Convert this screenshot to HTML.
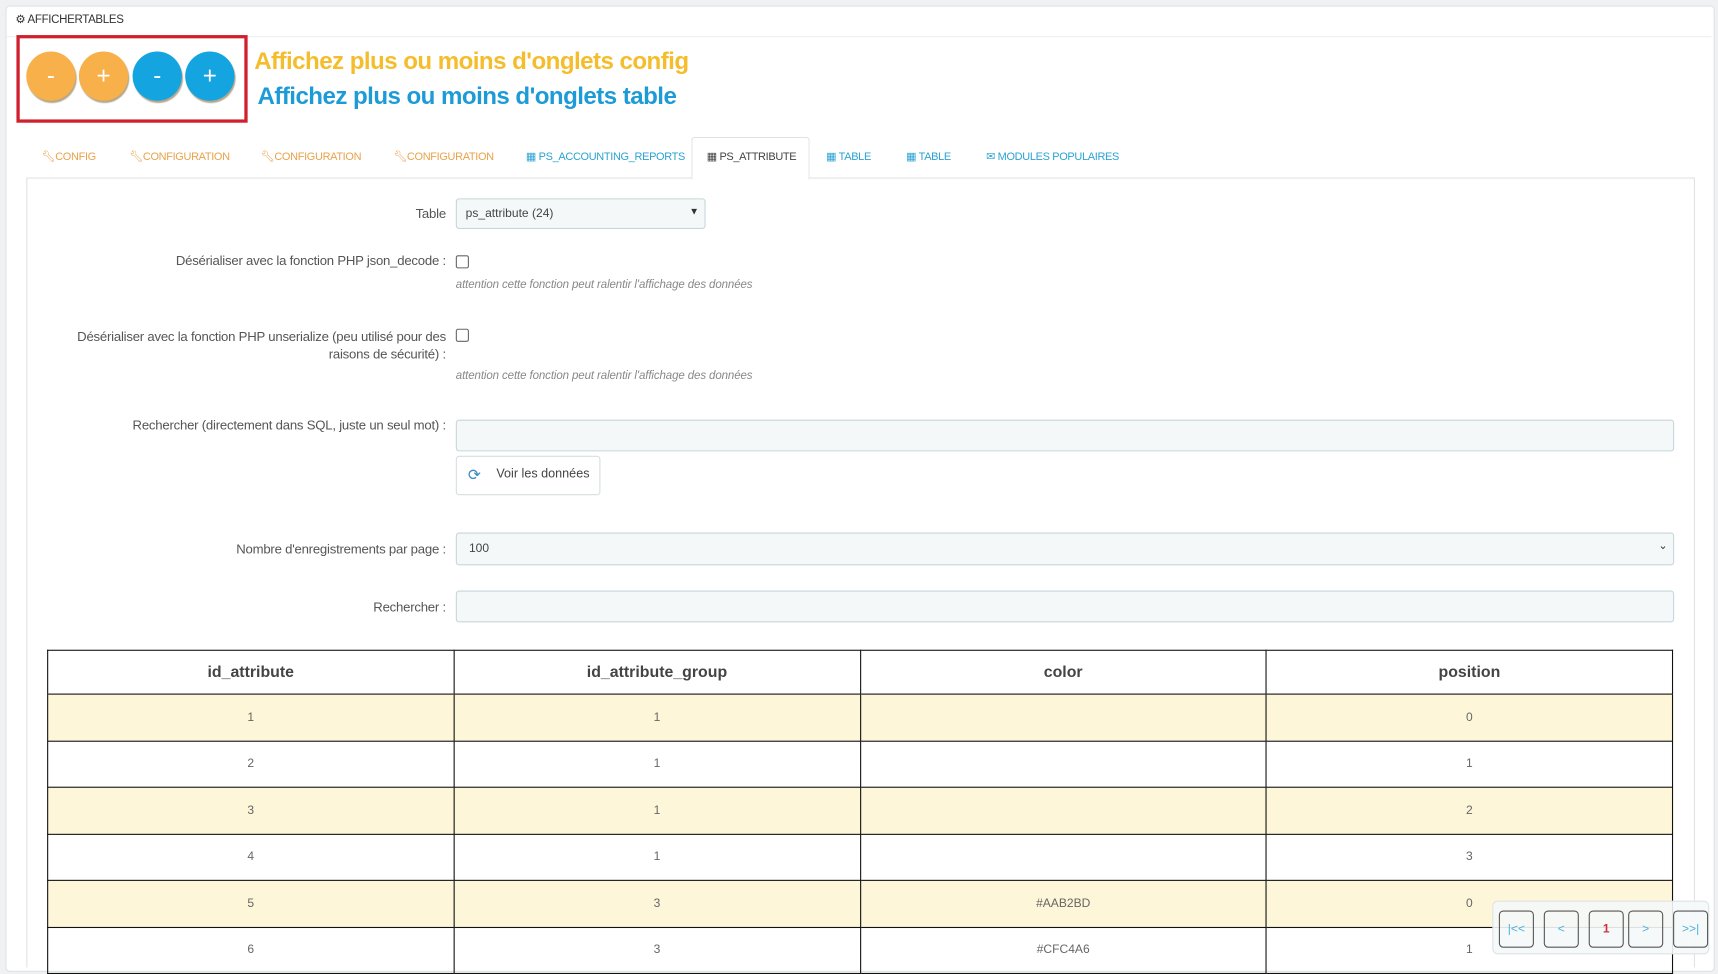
<!DOCTYPE html>
<html><head><meta charset="utf-8"><style>
html,body{margin:0;padding:0;width:1718px;height:964px;overflow:hidden;background:#eff1f2;}
#w{position:absolute;left:0;top:0;width:1568px;height:880px;transform:scale(1.09566);transform-origin:0 0;font-family:"Liberation Sans Narrow","Liberation Sans",sans-serif;color:#555;}
.a{position:absolute;}
.panel{left:5px;top:5px;width:1558px;height:880px;background:#fff;border:1px solid #dfe3e6;border-radius:4px;}
.c{border-radius:50%;width:45px;height:45px;color:#fff;font-size:22px;text-align:center;line-height:43px;box-shadow:1px 2px 1px rgba(90,60,0,.45);font-family:"Liberation Sans",sans-serif;}
.o{background:#f8b04a}.b{background:#14a4e0}
.tab{top:138px;font-size:10px;white-space:nowrap;letter-spacing:-0.3px;}
.or{color:#e9a24a}.bl{color:#2aa3d3}
.lbl{right:1161px;text-align:right;font-size:12px;color:#555;white-space:nowrap;letter-spacing:-0.2px;}
.inp{background:#f5f8f9;border:1px solid #c7d6db;border-radius:3px;}
.hint{left:416px;font-size:10.5px;font-style:italic;color:#888;letter-spacing:-0.1px;}
.chk{width:10px;height:10px;border:1px solid #666;border-radius:2px;background:#fff;left:416px;}
table{position:absolute;left:43px;top:593px;width:1484px;border-collapse:collapse;font-size:11px;table-layout:fixed;}
td,th{border:1.5px solid #111;text-align:center;padding:0;}
th{height:39px;font-size:14.5px;color:#444;font-weight:bold;border-bottom:none;}
td{height:41.5px;color:#666;}
tr.y td{background:#fdf6d8;}
.pg{left:1362px;top:822px;width:196px;height:47px;background:rgba(245,248,250,.9);border:1px solid #dde3e6;border-radius:5px;}
.pb{top:8px;width:30px;height:32px;border:1px solid #555;border-radius:4px;font-size:11px;color:#4ab0d8;text-align:center;line-height:32px;}
</style></head><body><div id="w">
<div class="a panel"></div>
<div class="a" style="left:14px;top:12px;font-size:10.5px;color:#333;letter-spacing:-0.3px;">⚙ AFFICHERTABLES</div>
<div class="a" style="left:6px;top:33px;width:1556px;height:1px;background:#eceff1;"></div>
<div class="a" style="left:15px;top:32px;width:205px;height:74px;border:3px solid #d0202e;"></div>
<div class="a c o" style="left:24px;top:47px;">-</div>
<div class="a c o" style="left:72px;top:47px;">+</div>
<div class="a c b" style="left:121px;top:47px;">-</div>
<div class="a c b" style="left:169px;top:47px;">+</div>
<div class="a" style="left:232px;top:43px;font-size:22px;font-weight:bold;color:#f5bd2c;white-space:nowrap;font-family:'Liberation Sans',sans-serif;letter-spacing:-0.5px;">Affichez plus ou moins d'onglets config</div>
<div class="a" style="left:235px;top:75px;font-size:22px;font-weight:bold;color:#1d9bd6;white-space:nowrap;font-family:'Liberation Sans',sans-serif;letter-spacing:-0.5px;">Affichez plus ou moins d'onglets table</div>
<div class="a" style="left:24px;top:162px;width:1521px;height:720px;border:1px solid #dfe3e6;border-bottom:none;"></div>
<div class="a" style="left:631px;top:125px;width:106px;height:38px;background:#fff;border:1px solid #dfe3e6;border-bottom:none;border-radius:3px 3px 0 0;"></div>
<div class="a tab or" style="left:38px;">🔧︎CONFIG</div>
<div class="a tab or" style="left:118px;">🔧︎CONFIGURATION</div>
<div class="a tab or" style="left:238px;">🔧︎CONFIGURATION</div>
<div class="a tab or" style="left:359px;">🔧︎CONFIGURATION</div>
<div class="a tab bl" style="left:480px;">▦ PS_ACCOUNTING_REPORTS</div>
<div class="a tab" style="left:645px;color:#444;">▦ PS_ATTRIBUTE</div>
<div class="a tab bl" style="left:754px;">▦ TABLE</div>
<div class="a tab bl" style="left:827px;">▦ TABLE</div>
<div class="a tab bl" style="left:900px;">✉ MODULES POPULAIRES</div>

<div class="a lbl" style="top:188px;">Table</div>
<div class="a inp" style="left:416px;top:181px;width:226px;height:26px;background:#f5f8f9;"><span class="a" style="left:8px;top:7px;font-size:11px;color:#444;">ps_attribute (24)</span><span class="a" style="right:5px;top:6px;font-size:9px;color:#333;">▼</span></div>
<div class="a lbl" style="top:231px;">Désérialiser avec la fonction PHP json_decode :</div>
<div class="a chk" style="top:233px;"></div>
<div class="a hint" style="top:254px;">attention cette fonction peut ralentir l'affichage des données</div>
<div class="a lbl" style="top:299px;line-height:16px;">Désérialiser avec la fonction PHP unserialize (peu utilisé pour des<br>raisons de sécurité) :</div>
<div class="a chk" style="top:300px;"></div>
<div class="a hint" style="top:337px;">attention cette fonction peut ralentir l'affichage des données</div>
<div class="a lbl" style="top:381px;">Rechercher (directement dans SQL, juste un seul mot) :</div>
<div class="a inp" style="left:416px;top:383px;width:1110px;height:27px;"></div>
<div class="a" style="left:416px;top:416px;width:130px;height:34px;border:1px solid #d8dee1;border-radius:3px;background:#fff;"><span class="a" style="left:10px;top:8px;color:#3a8bc4;font-size:14px;">⟳</span><span class="a" style="left:36px;top:10px;font-size:11.5px;color:#444;">Voir les données</span></div>
<div class="a lbl" style="top:494px;">Nombre d'enregistrements par page :</div>
<div class="a inp" style="left:416px;top:486px;width:1110px;height:28px;"><span class="a" style="left:11px;top:8px;font-size:11px;color:#444;">100</span><span class="a" style="right:5px;top:6px;font-size:10px;color:#333;">⌄</span></div>
<div class="a lbl" style="top:547px;">Rechercher :</div>
<div class="a inp" style="left:416px;top:539px;width:1110px;height:27px;"></div>

<table>
<colgroup><col style="width:25%"><col style="width:25%"><col style="width:25%"><col style="width:25%"></colgroup>
<tr><th>id_attribute</th><th>id_attribute_group</th><th>color</th><th>position</th></tr>
<tr class="y"><td>1</td><td>1</td><td></td><td>0</td></tr>
<tr><td>2</td><td>1</td><td></td><td>1</td></tr>
<tr class="y"><td>3</td><td>1</td><td></td><td>2</td></tr>
<tr><td>4</td><td>1</td><td></td><td>3</td></tr>
<tr class="y"><td>5</td><td>3</td><td>#AAB2BD</td><td>0</td></tr>
<tr><td>6</td><td>3</td><td>#CFC4A6</td><td>1</td></tr>
</table>
<div class="a pg">
<div class="a pb" style="left:5px;">|&lt;&lt;</div>
<div class="a pb" style="left:46px;">&lt;</div>
<div class="a pb" style="left:87px;color:#d0303a;font-weight:bold;">1</div>
<div class="a pb" style="left:123px;">&gt;</div>
<div class="a pb" style="left:164px;">&gt;&gt;|</div>
</div>
</div></body></html>
